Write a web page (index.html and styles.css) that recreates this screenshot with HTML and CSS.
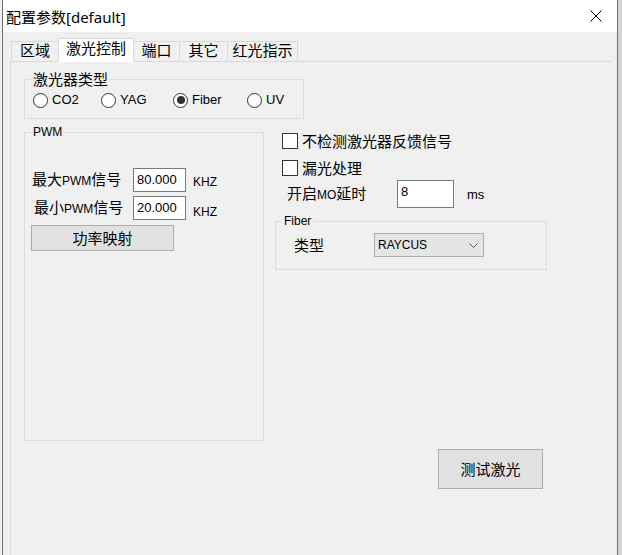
FILE: index.html
```html
<!DOCTYPE html>
<html lang="zh-CN">
<head>
<meta charset="utf-8">
<title>配置参数[default]</title>
<link rel="stylesheet" href="styles.css">
</head>
<body>
<div class="screen">
  <div class="edge-left"></div>
  <div class="window">
    <div class="titlebar">
      <span class="title">配置参数[default]</span>
      <svg class="close" viewBox="0 0 12 12" aria-hidden="true"><path d="M0.5 0.5 L11.5 11.5 M11.5 0.5 L0.5 11.5" stroke="#000" stroke-width="1" fill="none"/></svg>
    </div>
    <div class="client">
      <div class="tabs">
        <div class="tab">区域</div>
        <div class="tab tab-active">激光控制</div>
        <div class="tab">端口</div>
        <div class="tab">其它</div>
        <div class="tab">红光指示</div>
      </div>
      <div class="panel">
        <fieldset class="group group-type">
          <legend class="legend">激光器类型</legend>
          <div class="radios">
            <div class="radio"><span class="radio-dot"></span>CO2</div>
            <div class="radio"><span class="radio-dot"></span>YAG</div>
            <div class="radio"><span class="radio-dot is-checked"></span>Fiber</div>
            <div class="radio"><span class="radio-dot"></span>UV</div>
          </div>
        </fieldset>
        <div class="columns">
          <fieldset class="group group-pwm">
            <legend class="legend-sm">PWM</legend>
            <div class="pwm-row pwm-row-first">
              <span class="field-label">最大<span class="latin">PWM</span>信号</span>
              <div class="input input-pwm">80.000</div>
              <span class="unit">KHZ</span>
            </div>
            <div class="pwm-row pwm-row-second">
              <span class="field-label field-label-shift">最小<span class="latin">PWM</span>信号</span>
              <div class="input input-pwm">20.000</div>
              <span class="unit unit-low">KHZ</span>
            </div>
            <div class="btn btn-map">功率映射</div>
          </fieldset>
          <div class="right-col">
            <div class="check-row"><span class="check-box"></span>不检测激光器反馈信号</div>
            <div class="check-row"><span class="check-box"></span>漏光处理</div>
            <div class="mo-row">
              <span class="mo-label">开启<span class="latin">MO</span>延时</span>
              <div class="input input-mo">8</div>
              <span class="ms">ms</span>
            </div>
            <fieldset class="group group-fiber">
              <legend class="legend-sm">Fiber</legend>
              <div class="fiber-row">
                <span class="fiber-label">类型</span>
                <div class="select">
                  <span>RAYCUS</span>
                  <svg class="chevron" viewBox="0 0 9 5" aria-hidden="true"><path d="M0.5 0.5 L4.5 4.5 L8.5 0.5" stroke="#555" stroke-width="1" fill="none"/></svg>
                </div>
              </div>
            </fieldset>
          </div>
        </div>
        <div class="footer">
          <div class="btn btn-test">测试激光</div>
        </div>
      </div>
    </div>
  </div>
  <div class="edge-right"></div>
</div>
</body>
</html>
```
FILE: styles.css
```css
html, body {
  margin: 0;
  padding: 0;
}
body {
  width: 622px;
  height: 555px;
  overflow: hidden;
  background: #f0f0f0;
  font-family: "Noto Sans CJK SC", sans-serif;
  color: #000;
}
.screen {
  display: flex;
  height: 555px;
}
.edge-left {
  flex: none;
  width: 2px;
  background: #f0f0f0;
  border-right: 1px solid #6d6d6d;
}
.window {
  flex: none;
  width: 614px;
  display: flex;
  flex-direction: column;
}
.edge-right {
  flex: 1;
  background: #d4d4d4;
  border-left: 1px solid #6d6d6d;
}
.titlebar {
  height: 32px;
  flex: none;
  box-sizing: border-box;
  background: #fff;
  display: flex;
  align-items: center;
  justify-content: space-between;
  padding: 0 15px 0 3px;
}
.title {
  font-family: "Noto Sans", "Noto Sans CJK SC", sans-serif;
  font-size: 15px;
  line-height: 20px;
  margin-top: 1px;
}
.close {
  width: 12px;
  height: 12px;
  display: block;
}
.client {
  flex: 1;
  display: flex;
  flex-direction: column;
  padding: 6px 0 0 7px;
}
.tabs {
  display: flex;
  align-items: flex-end;
  height: 23px;
  padding-left: 2px;
  flex: none;
}
.tab {
  box-sizing: border-box;
  height: 20px;
  border: 1px solid #d9d9d9;
  border-bottom: none;
  margin-left: -1px;
  background: #f0f0f0;
  font-size: 15px;
  line-height: 16px;
  text-align: center;
}
.tab:nth-child(1) { width: 48px; }
.tab:nth-child(2) { width: 76px; }
.tab:nth-child(3) { width: 47px; }
.tab:nth-child(4) { width: 49px; }
.tab:nth-child(5) { width: 71px; }
.tab-active {
  height: 24px;
  margin-bottom: -1px;
  background: #fff;
  line-height: 18px;
  position: relative;
  z-index: 1;
}
.panel {
  flex: 1;
  box-sizing: border-box;
  width: 601px;
  border-top: 1px solid #d9d9d9;
  border-left: 1px solid #d9d9d9;
  padding: 8px 0 0 13px;
}
.group {
  margin: 0;
  min-width: 0;
  box-sizing: border-box;
  border: 1px solid #dcdcdc;
  padding: 0 0 0 6px;
}
.legend {
  padding: 0 2px;
  font-size: 15px;
  line-height: 18px;
}
.legend-sm {
  padding: 0 2px;
  font-family: "Liberation Sans", sans-serif;
  font-size: 12px;
  line-height: 14px;
}
.group-type {
  width: 280px;
  padding-bottom: 10px;
}
.radios {
  display: grid;
  grid-template-columns: 68px 72px 74px auto;
  align-items: center;
  height: 16px;
  margin: 4px 0 0 2px;
}
.radio {
  display: flex;
  align-items: center;
  gap: 4px;
  font-family: "Liberation Sans", sans-serif;
  font-size: 13px;
  line-height: 16px;
}
.radio-dot {
  flex: none;
  width: 15px;
  height: 15px;
  box-sizing: border-box;
  border: 1px solid #333;
  border-radius: 50%;
  background: #fff;
  display: flex;
  align-items: center;
  justify-content: center;
}
.radio-dot.is-checked::after {
  content: "";
  width: 8px;
  height: 8px;
  border-radius: 50%;
  background: #333;
}
.columns {
  display: grid;
  grid-template-columns: 240px 272px;
  column-gap: 11px;
  align-items: start;
  margin-top: 6px;
}
.group-pwm {
  height: 316px;
}
.latin {
  font-family: "Liberation Sans", sans-serif;
  font-size: 12px;
}
.pwm-row {
  display: flex;
  align-items: center;
  height: 24px;
}
.pwm-row-first { margin-top: 29px; }
.pwm-row-second { margin-top: 4px; }
.field-label {
  width: 101px;
  margin-left: 1px;
  font-size: 15px;
  line-height: 20px;
}
.field-label-shift {
  width: 99px;
  margin-left: 3px;
}
.input {
  box-sizing: border-box;
  border: 1px solid #7a7a7a;
  background: #fff;
  font-family: "Liberation Sans", sans-serif;
  font-size: 13px;
  padding-left: 3px;
}
.input-pwm {
  width: 53px;
  height: 24px;
  line-height: 22px;
}
.unit {
  margin: 3px 0 0 7px;
  font-family: "Liberation Sans", sans-serif;
  font-size: 12px;
}
.unit-low { margin-top: 7px; }
.btn {
  box-sizing: border-box;
  border: 1px solid #adadad;
  background: #e1e1e1;
  display: flex;
  align-items: center;
  justify-content: center;
  font-size: 15px;
  line-height: 18px;
}
.btn-map {
  width: 143px;
  height: 26px;
  margin-top: 5px;
}
.right-col {
  padding-top: 8px;
}
.check-row {
  display: flex;
  align-items: center;
  gap: 4px;
  height: 16px;
  margin-left: 7px;
  font-size: 15px;
  line-height: 16px;
}
.check-row + .check-row { margin-top: 11px; }
.check-box {
  flex: none;
  width: 16px;
  height: 16px;
  box-sizing: border-box;
  border: 1px solid #333;
  background: #fff;
}
.mo-row {
  display: flex;
  align-items: center;
  height: 28px;
  margin: 4px 0 0 12px;
}
.mo-label {
  width: 110px;
  font-size: 15px;
  line-height: 20px;
}
.input-mo {
  width: 57px;
  height: 28px;
  padding-top: 3px;
  line-height: 16px;
}
.ms {
  margin-left: 13px;
  font-family: "Liberation Sans", sans-serif;
  font-size: 13px;
}
.group-fiber {
  width: 272px;
  margin-top: 6px;
  padding-bottom: 12px;
}
.fiber-row {
  display: flex;
  align-items: center;
  height: 24px;
  margin: 5px 0 0 12px;
}
.fiber-label {
  width: 80px;
  font-size: 15px;
  line-height: 20px;
}
.select {
  width: 110px;
  height: 24px;
  box-sizing: border-box;
  border: 1px solid #adadad;
  background: #e5e5e5;
  display: flex;
  align-items: center;
  justify-content: space-between;
  padding: 0 5px 0 3px;
  font-family: "Liberation Sans", sans-serif;
  font-size: 12px;
}
.chevron {
  width: 9px;
  height: 5px;
  display: block;
}
.footer {
  display: flex;
  margin: 8px 0 0 414px;
}
.btn-test {
  width: 105px;
  height: 40px;
}
```
